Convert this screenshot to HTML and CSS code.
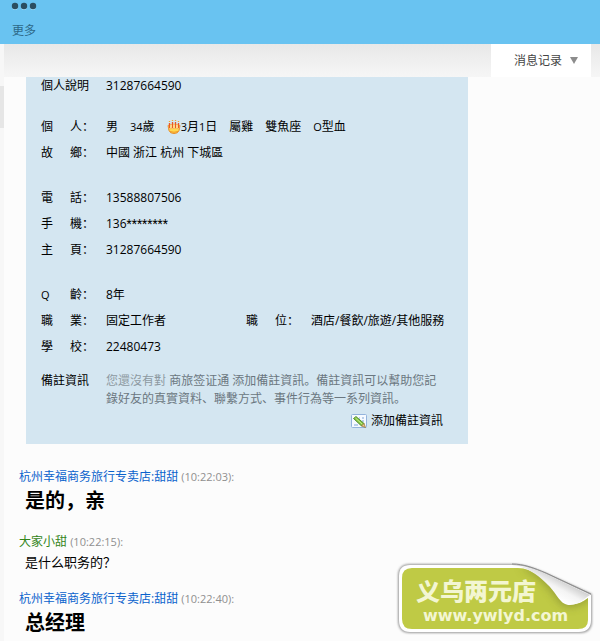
FILE: index.html
```html
<!DOCTYPE html>
<html lang="zh">
<head>
    <meta charset="UTF-8">
    <meta name="viewport" content="width=device-width, initial-scale=1.0">
    <title>消息记录</title>
    <link rel="stylesheet" href="styles.css">
</head>
<body>
    <header class="toolbar">
        <button type="button" class="more-btn">
            <svg width="26" height="8" viewBox="0 0 26 8" aria-hidden="true">
                <g fill="#a5dcf8">
                    <circle cx="4" cy="5" r="3"/><circle cx="13" cy="5" r="3"/><circle cx="22" cy="5" r="3"/>
                </g>
                <g fill="#2b4d60">
                    <circle cx="4" cy="4" r="3.200"/><circle cx="13" cy="4" r="3.200"/><circle cx="22" cy="4" r="3.200"/>
                </g>
            </svg>
            <span>更多</span>
        </button>
    </header>

    <div class="layout">
        <aside class="rail"><div class="rail-thumb"></div></aside>
        <main class="content">
            <nav class="tabs">
                <button type="button" class="tab">消息记录
                    <svg width="8" height="7" viewBox="0 0 8 7" aria-hidden="true"><path d="M0 0h8L4 7z" fill="#8c8c8c"/></svg>
                </button>
            </nav>

            <section class="card">
                <dl class="row row-top">
                    <dt>個人說明</dt>
                    <dd>31287664590</dd>
                </dl>

                <div class="group">
                    <dl class="row">
                        <dt><span>個</span><span>人：</span></dt>
                        <dd class="facts">
                            <span>男</span>
                            <span><small>34</small>歲</span>
                            <span class="birthday">
                                <svg width="14" height="15" viewBox="0 0 14 15" aria-hidden="true">
                                    <path d="M1 5.500h12l-1 5q-1 3-5 3t-5-3z" fill="#ffd84e" stroke="#e58a2a"/>
                                    <path d="M1.500 5q5.500-2 11 0v3q-1 2-2 0q-1 2-2 0q-1 2-2 0q-1 2-2 0q-1.500 2-3 0z" fill="#fff0a0" stroke="#ee9632" stroke-width=".6"/>
                                    <path d="M2.500 3v5M5.500 2v6M8.500 2v6M11.500 3v5" stroke="#ea5a24" stroke-width="1.300"/>
                                    <path d="M2.500 1v1M5.500 0v1M8.500 0v1M11.500 1v1" stroke="#f6a52c" stroke-width="1.300"/>
                                    <path d="M3 11.500q4 1.500 8 0" fill="none" stroke="#f29a26"/>
                                </svg>
                                <span><small>3</small>月<small>1</small>日</span>
                            </span>
                            <span>屬雞</span>
                            <span>雙魚座</span>
                            <span><small>O</small>型血</span>
                        </dd>
                    </dl>
                    <dl class="row">
                        <dt><span>故</span><span>鄉：</span></dt>
                        <dd>中國 浙江 杭州 下城區</dd>
                    </dl>
                </div>

                <div class="group">
                    <dl class="row">
                        <dt><span>電</span><span>話：</span></dt>
                        <dd>13588807506</dd>
                    </dl>
                    <dl class="row">
                        <dt><span>手</span><span>機：</span></dt>
                        <dd>136<span class="mask">********</span></dd>
                    </dl>
                    <dl class="row">
                        <dt><span>主</span><span>頁：</span></dt>
                        <dd>31287664590</dd>
                    </dl>
                </div>

                <div class="group">
                    <dl class="row">
                        <dt><span><small>Q</small></span><span>齡：</span></dt>
                        <dd>8年</dd>
                    </dl>
                    <dl class="row row-pair">
                        <dt><span>職</span><span>業：</span></dt>
                        <dd>固定工作者</dd>
                        <dt><span>職</span><span>位：</span></dt>
                        <dd>酒店/餐飲/旅遊/其他服務</dd>
                    </dl>
                    <dl class="row">
                        <dt><span>學</span><span>校：</span></dt>
                        <dd>22480473</dd>
                    </dl>
                </div>

                <dl class="row row-note">
                    <dt>備註資訊</dt>
                    <dd><span class="faint">您還沒有對</span> 商旅签证通 添加備註資訊。備註資訊可以幫助您記錄好友的真實資料、聯繫方式、事件行為等一系列資訊。</dd>
                </dl>
                <a href="#" class="add-note">
                    <svg width="16" height="15" viewBox="0 0 16 15" aria-hidden="true">
                        <rect x=".5" y=".5" width="15" height="13" rx="1" fill="#f6faff" stroke="#93b3dc"/>
                        <path d="M8 4h1M11 4h2M11 7h2M3 11h4" stroke="#7fa6d6"/>
                        <path d="M2.500 4.500L5 2.500l8 7-2.500 2.500z" fill="#83c341" stroke="#3f7d1d" stroke-width=".8"/>
                        <path d="M4.500 4l7 6.500" stroke="#c9ec8c"/>
                        <path d="M13 9.500l1.500 4-4-1.500z" fill="#f0c98a" stroke="#8a6a2c" stroke-width=".7"/>
                    </svg>
                    添加備註資訊
                </a>
            </section>

            <section class="chat">
                <article class="message">
                    <p class="sender">杭州幸福商务旅行专卖店:甜甜 <time>(10:22:03):</time></p>
                    <p class="text text-big">是的，亲</p>
                </article>
                <article class="message message-own">
                    <p class="sender">大家小甜 <time>(10:22:15):</time></p>
                    <p class="text">是什么职务的？</p>
                </article>
                <article class="message">
                    <p class="sender">杭州幸福商务旅行专卖店:甜甜 <time>(10:22:40):</time></p>
                    <p class="text text-big">总经理</p>
                </article>
            </section>
        </main>
    </div>

    <!-- shop sticker over the page corner -->
    <svg class="sticker" width="200" height="76" viewBox="0 0 200 76">
        <defs>
            <linearGradient id="curl" gradientUnits="userSpaceOnUse" x1="172" y1="20" x2="158" y2="46">
                <stop offset="0" stop-color="#c4c4c4"/>
                <stop offset=".4" stop-color="#f4f4f4"/>
                <stop offset=".75" stop-color="#ffffff"/>
                <stop offset="1" stop-color="#dddddd"/>
            </linearGradient>
            <filter id="soft" x="-10%" y="-20%" width="120%" height="140%"><feGaussianBlur stdDeviation="1"/></filter>
            <filter id="shade" x="-30%" y="-30%" width="160%" height="160%"><feGaussianBlur stdDeviation="4"/></filter>
            <clipPath id="green"><path d="M14 8H122C136 8 150 19 165 36C172 46 180 47 192 38V60Q192 69 182 69H16Q6 69 6 59V18Q6 8 16 8z"/></clipPath>
        </defs>
        <path d="M14 4H116C128 4 138 8 150 13L196 34V61Q196 73 184 73H14Q2 73 2 60V16Q2 4 14 4z" fill="#999" filter="url(#soft)"/>
        <path d="M14 5H116C128 5 138 9 150 14L195 35V60Q195 72 183 72H14Q3 72 3 60V16Q3 5 14 5z" fill="#fff"/>
        <g clip-path="url(#green)">
            <rect width="200" height="76" fill="#bfca45"/>
            <path d="M124 8C142 14 152 26 164 43Q174 52 194 39V2z" fill="#858c30" opacity=".7" filter="url(#shade)"/>
        </g>
        <path d="M122 6C136 10 144 17 152 25C162 35 164 45 174 45C182 45 188 39 194 35L150 14C140 9 130 7 122 6z" fill="url(#curl)"/>
        <path d="M116 4C128 4 138 8 150 13L195 34" fill="none" stroke="#8a8a8a" stroke-width="1"/>
        <text class="sticker-name" x="20" y="40">义乌两元店</text>
        <text class="sticker-url" x="27" y="61">www.ywlyd.com</text>
    </svg>
</body>
</html>
```

FILE: styles.css
```css
* {
    box-sizing: border-box;
}

body {
    margin: 0;
    min-height: 100vh;
    display: flex;
    flex-direction: column;
    position: relative;
    background: #fcfcfc;
    color: #111;
    font-family: "Open Sans", "Noto Sans CJK SC", sans-serif;
    font-size: 12px;
    line-height: 18px;
}

button {
    border: none;
    padding: 0;
    font: inherit;
    cursor: pointer;
}

p, dl, dd {
    margin: 0;
}

small {
    font-size: 11px;
}

.toolbar {
    height: 44px;
    padding: 2px 11px;
    background: #69c3f1;
}

.more-btn {
    display: flex;
    flex-direction: column;
    align-items: flex-start;
    gap: 12px;
    background: none;
    color: #2d6888;
}

.more-btn span {
    padding-left: 1px;
}

.layout {
    display: flex;
    flex: 1;
}

.rail {
    width: 4px;
    padding-top: 42px;
    background: #f7f7f7;
}

.rail-thumb {
    height: 42px;
    background: #e6e6e6;
}

.content {
    flex: 1;
}

.tabs {
    display: flex;
    justify-content: flex-end;
    height: 33px;
    padding-right: 9px;
    background: linear-gradient(#e8e8e8, #f6f6f6);
}

.tab {
    display: flex;
    align-items: center;
    justify-content: center;
    gap: 8px;
    width: 100px;
    padding-left: 10px;
    background: #fff;
    color: #444;
}

.card {
    display: flex;
    flex-direction: column;
    max-width: 442px;
    margin-left: 22px;
    padding: 0 25px 14px 15px;
    background: #d4e6f1;
    color: #000;
    font-family: "Open Sans", "Noto Sans CJK TC", sans-serif;
}

.group {
    margin-top: 19px;
}

.row {
    display: grid;
    grid-template-columns: 65px 1fr;
    line-height: 26px;
}

.row dt {
    display: flex;
    justify-content: space-between;
    width: 53px;
}

.row-top,
.row-note {
    line-height: 18px;
}

.row-pair {
    grid-template-columns: 65px 140px 65px 1fr;
    margin-right: -25px;
}

.row-note {
    margin-top: 12px;
}

.row-note dd {
    width: 336px;
    color: #6b7780;
}

.row-note .faint {
    color: #8d99a1;
}

.facts {
    display: flex;
    gap: 12px;
}

.birthday {
    display: flex;
    align-items: center;
}

.mask {
    font-family: Roboto, sans-serif;
}

.add-note {
    display: flex;
    align-items: center;
    align-self: flex-end;
    gap: 4px;
    margin-top: 4px;
    color: #000;
    text-decoration: none;
}

.chat {
    display: flex;
    flex-direction: column;
    gap: 19px;
    padding: 24px 15px 0;
}

.message {
    display: flex;
    flex-direction: column;
    gap: 2px;
}

.sender {
    color: #0a62cc;
}

.sender time {
    color: #8f8f8f;
    font-size: 11px;
}

.message-own .sender {
    color: #33851a;
}

.text {
    padding-left: 6px;
    color: #000;
    font-size: 13px;
}

.text-big {
    font-size: 20px;
    font-weight: bold;
    line-height: 26px;
}

.sticker {
    position: absolute;
    right: 4px;
    bottom: 5px;
}

.sticker-name {
    fill: #f3f6d2;
    font: 900 24px "Noto Sans CJK SC", sans-serif;
}

.sticker-url {
    fill: #f3f6d2;
    font: bold 16px "DejaVu Sans", sans-serif;
}
```
